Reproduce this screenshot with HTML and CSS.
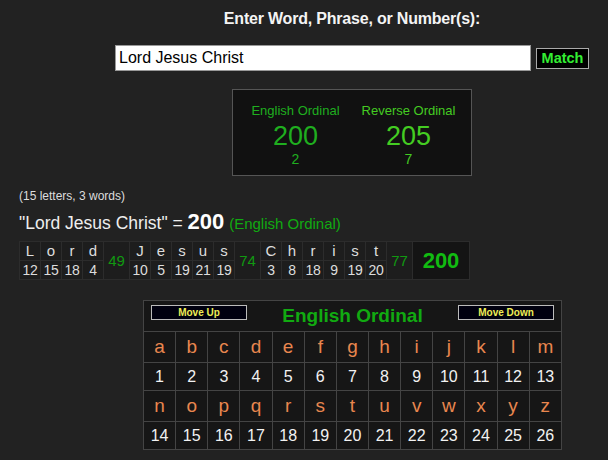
FILE: index.html
```html
<!DOCTYPE html>
<html lang="en">
  <head>
    <meta charset="UTF-8" />
    <meta name="viewport" content="width=device-width, initial-scale=1.0" />
    <title>Gematria</title>
    <link rel="stylesheet" href="styles.css">
  </head>
  <body>
    <div class="top">
      <h1 class="prompt">Enter Word, Phrase, or Number(s):</h1>
      <form class="search">
        <input class="search-box" type="text" value="Lord Jesus Christ">
        <button class="match-btn" type="button">Match</button>
      </form>

      <!-- 결과 박스 -->
      <div class="results">
        <div class="result">
          <div class="result-name">English Ordinal</div>
          <div class="result-value">200</div>
          <div class="result-reduced">2</div>
        </div>
        <div class="result alt">
          <div class="result-name">Reverse Ordinal</div>
          <div class="result-value">205</div>
          <div class="result-reduced">7</div>
        </div>
      </div>
    </div>

    <p class="count">(15 letters, 3 words)</p>
    <p class="equation">"Lord Jesus Christ" = <b>200</b> <span class="cipher-name">(English Ordinal)</span></p>

    <!-- 글자별 값 -->
    <table class="breakdown">
      <colgroup>
        <col class="c-ch"><col class="c-ch"><col class="c-ch"><col class="c-ch"><col class="c-word">
        <col class="c-ch"><col class="c-ch"><col class="c-ch"><col class="c-ch"><col class="c-ch"><col class="c-word">
        <col class="c-ch"><col class="c-ch"><col class="c-ch"><col class="c-ch"><col class="c-ch"><col class="c-ch"><col class="c-word">
        <col class="c-total">
      </colgroup>
      <tr class="ch">
        <td>L</td><td>o</td><td>r</td><td>d</td>
        <td class="word" rowspan="2">49</td>
        <td>J</td><td>e</td><td>s</td><td>u</td><td>s</td>
        <td class="word" rowspan="2">74</td>
        <td>C</td><td>h</td><td>r</td><td>i</td><td>s</td><td>t</td>
        <td class="word" rowspan="2">77</td>
        <td class="total" rowspan="2">200</td>
      </tr>
      <tr class="num">
        <td>12</td><td>15</td><td>18</td><td>4</td>
        <td>10</td><td>5</td><td>19</td><td>21</td><td>19</td>
        <td>3</td><td>8</td><td>18</td><td>9</td><td>19</td><td>20</td>
      </tr>
    </table>

    <!-- 암호표 -->
    <table class="cipher">
      <tr class="cipher-head">
        <th colspan="13">
          <div class="head-bar">
            <button class="move-btn" type="button">Move Up</button>
            <span class="cipher-title">English Ordinal</span>
            <button class="move-btn" type="button">Move Down</button>
          </div>
        </th>
      </tr>
      <tr class="letters">
        <td>a</td><td>b</td><td>c</td><td>d</td><td>e</td><td>f</td><td>g</td><td>h</td><td>i</td><td>j</td><td>k</td><td>l</td><td>m</td>
      </tr>
      <tr class="values">
        <td>1</td><td>2</td><td>3</td><td>4</td><td>5</td><td>6</td><td>7</td><td>8</td><td>9</td><td>10</td><td>11</td><td>12</td><td>13</td>
      </tr>
      <tr class="letters">
        <td>n</td><td>o</td><td>p</td><td>q</td><td>r</td><td>s</td><td>t</td><td>u</td><td>v</td><td>w</td><td>x</td><td>y</td><td>z</td>
      </tr>
      <tr class="values">
        <td>14</td><td>15</td><td>16</td><td>17</td><td>18</td><td>19</td><td>20</td><td>21</td><td>22</td><td>23</td><td>24</td><td>25</td><td>26</td>
      </tr>
    </table>
  </body>
</html>
```

FILE: styles.css
```css
body {
  margin: 0;
  background-color: #222;
  color: #eee;
  font-family: "Liberation Sans", Arial, sans-serif;
}
/* 가운데 열 (왼쪽에서 96px 밀림) */
.top {
  width: 512px;
  margin-left: 96px;
}
.prompt {
  margin: 0;
  padding-top: 9px;
  font-size: 16px;
  line-height: 20px;
  font-weight: bold;
  letter-spacing: -0.2px;
  text-align: center;
  color: #f4f4f4;
}

/* 검색줄 */
.search {
  display: flex;
  justify-content: center;
  align-items: center;
  gap: 5px;
  margin: 16px 0 0;
}
.search-box {
  width: 416px;
  height: 26px;
  box-sizing: border-box;
  margin: 0;
  padding: 0 3px;
  border: 1px solid #999;
  background-color: #fff;
  color: #000;
  font: 16px "Liberation Sans", Arial, sans-serif;
}
.match-btn {
  width: 53px;
  height: 21px;
  box-sizing: border-box;
  padding: 0;
  border: 1px solid #aaa;
  background-color: #000;
  color: #33ee33;
  font: bold 14.5px "Liberation Sans", Arial, sans-serif;
}

/* 결과 박스 */
.results {
  display: flex;
  width: 226px;
  margin: 18px auto 0;
  padding: 12px 6px 7px;
  background-color: #111;
  border: 1px solid #555;
}
.result {
  flex: 1;
  text-align: center;
  color: #1fae1f;
}
.result.alt {
  color: #44cc22;
}
.result-name {
  font-size: 13px;
  line-height: 17px;
}
.result-value {
  margin-top: 2px;
  font-size: 27px;
  line-height: 30px;
}
.result-reduced {
  font-size: 14px;
  line-height: 17px;
}

.count {
  margin: 13px 0 0 19px;
  font-size: 12px;
  line-height: 14px;
  color: #ddd;
}
.equation {
  margin: 8px 0 0 19px;
  height: 22px;
  font-size: 17.5px;
  line-height: 22px;
  color: #eee;
}
.equation b {
  font-size: 22px;
  color: #fff;
}
.equation .cipher-name {
  font-size: 15px;
  color: #11aa11;
}

/* 글자별 값 */
.breakdown {
  margin: 8px 0 0 19px;
  width: 451px;
  border-collapse: collapse;
  table-layout: fixed;
  background-color: #1a1a1a;
}
.c-ch {
  width: 21px;
}
.c-word {
  width: 26px;
}
.c-total {
  width: 57px;
}
.breakdown td {
  height: 18px;
  padding: 0;
  border: 1px solid #2c2c2c;
  background-color: #1d1d1d;
  text-align: center;
  line-height: 18px;
  color: #ddd;
}
.breakdown .ch td {
  font-size: 15px;
}
.breakdown .num td {
  font-size: 14px;
  letter-spacing: -0.3px;
}
.breakdown td.word {
  font-size: 15px;
  color: #119911;
}
.breakdown td.total {
  font-size: 22px;
  font-weight: bold;
  color: #11bb11;
  background-color: #141414;
}

/* 암호표 */
.cipher {
  margin: 20px 0 0 143px;
  width: 419px;
  border-collapse: collapse;
  table-layout: fixed;
  background-color: #161616;
}
.cipher td,
.cipher th {
  padding: 0;
  border: 1px solid #444;
  text-align: center;
}
.cipher-head th {
  height: 30px;
  vertical-align: top;
}
.head-bar {
  display: flex;
  justify-content: space-between;
  align-items: flex-start;
  padding: 4px 7px 0;
}
.move-btn {
  width: 96px;
  height: 15px;
  padding: 0;
  border: 1px solid #bbb;
  background-color: #00000f;
  color: #eeee55;
  font: bold 10px/13px "Liberation Sans", Arial, sans-serif;
}
.cipher-title {
  font-size: 19px;
  line-height: 22px;
  font-weight: bold;
  color: #11aa11;
}
.letters td {
  height: 30px;
  font-size: 19px;
  color: #e9874f;
}
.values td {
  height: 27px;
  font-size: 16px;
  color: #f2f2f2;
}
```
